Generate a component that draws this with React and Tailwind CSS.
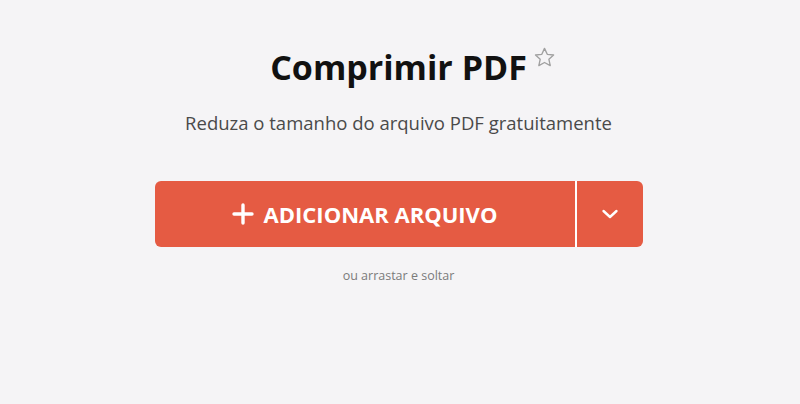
export default function App() {
  return (
    <div
      className="flex h-[404px] w-full flex-col items-center bg-[#f5f4f6] pr-[3px]"
      style={{ fontFamily: '"Open Sans", sans-serif' }}
    >
      <div className="relative mt-[43px]">
        <h1 className="text-[34px] font-bold leading-[48px] text-[#111]">Comprimir PDF</h1>
        <svg
          className="absolute left-[calc(100%+6px)] top-[3px]"
          width="23"
          height="23"
          viewBox="0 0 24 24"
          fill="none"
          stroke="#a0a0a0"
          strokeWidth="1.4"
          strokeLinejoin="round"
        >
          <path d="M12 2.5l2.9 6.2 6.6.7-4.9 4.5 1.4 6.6L12 17.2l-5.9 3.3 1.4-6.6-4.9-4.5 6.6-.7z" />
        </svg>
      </div>
      <p className="mt-[19px] text-[18.5px] leading-[26px] text-[#4a4a4a]">
        Reduza o tamanho do arquivo PDF gratuitamente
      </p>
      <div className="mt-[45px] flex h-[66px] w-[488px] overflow-hidden rounded-[6px]">
        <button
          type="button"
          className="flex flex-1 items-center justify-center gap-[10px] bg-[#e55b43] text-white"
        >
          <svg width="22" height="22" viewBox="0 0 22 22" stroke="white" strokeWidth="3.4" strokeLinecap="round">
            <path d="M11 2v18M2 11h18" />
          </svg>
          <span className="text-[22px] font-bold uppercase">Adicionar arquivo</span>
        </button>
        <div className="w-[2px] bg-white" />
        <button type="button" className="flex w-[66px] items-center justify-center bg-[#e55b43]">
          <svg width="20" height="20" viewBox="0 0 20 20" fill="none" stroke="white" strokeWidth="2.4" strokeLinecap="round" strokeLinejoin="round">
            <path d="M3.5 7l6.5 6 6.5-6" />
          </svg>
        </button>
      </div>
      <p className="mt-[20px] text-[12.5px] text-[#7b7b7b]">ou arrastar e soltar</p>
    </div>
  );
}
